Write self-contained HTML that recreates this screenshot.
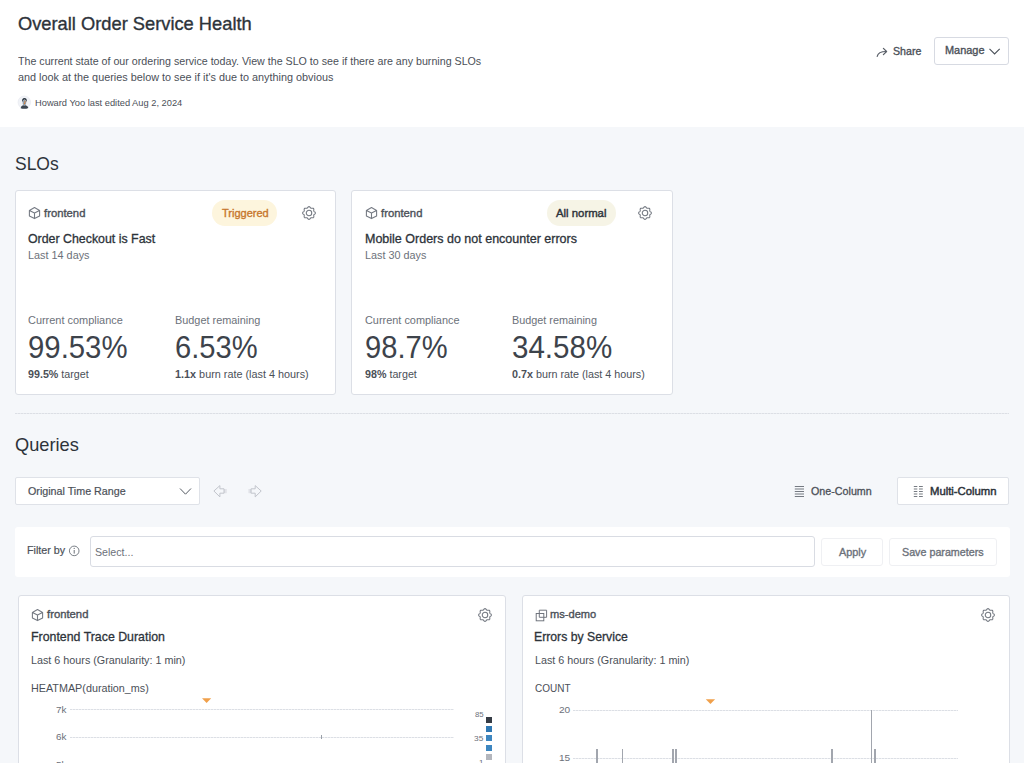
<!DOCTYPE html>
<html><head><meta charset="utf-8">
<style>
*{box-sizing:border-box;margin:0;padding:0}
html,body{width:1024px;height:763px;overflow:hidden}
body{font-family:"Liberation Sans",sans-serif;background:#f5f7fa;color:#2d333a;position:relative}
.tx{position:absolute;white-space:nowrap;line-height:1;transform-origin:0 0}
.bx{position:absolute}
.card{position:absolute;background:#fff;border:1px solid #dcdfe6;border-radius:3px}
svg{position:absolute;overflow:visible}
</style></head><body>
<div class="bx" style="left:0;top:0;width:1024px;height:127px;background:#fff"></div>

<!-- avatar -->
<svg style="left:17px;top:95px" width="15" height="15" viewBox="0 0 15 15">
<circle cx="7.3" cy="7.3" r="6.3" fill="#f1f3f7" stroke="#e2e5ec" stroke-width="0.5"/>
<path d="M3.6 13.2 Q4 10.6 6 10.2 L8.8 10.2 Q10.8 10.6 11.4 13 Q7.5 14.6 3.6 13.2 Z" fill="#3b4550"/>
<path d="M5 6.5 Q4.8 3.2 7.4 3 Q10 3.1 9.8 6.2 L9.3 6.8 Q9.4 4.8 7.4 4.6 Q5.6 4.8 5.6 6.8 Z" fill="#2e3742"/>
<path d="M5.6 6.4 Q5.6 4.8 7.4 4.7 Q9.3 4.8 9.3 6.6 L9 9 Q8.4 10.6 7.4 10.7 Q6.2 10.6 5.8 9.2 Z" fill="#8fa0ae"/>
<path d="M7.6 5.6 L8.6 6 L8.2 8.2 L7.4 9.6 L6.6 8.6 L7.6 7.8 Z" fill="#e27b2c"/>
</svg>
<!-- share -->
<svg style="left:873px;top:44px" width="18" height="16" viewBox="0 0 18 16">
<path d="M4.2 12.4 Q5.2 7.5 13.3 7.5" fill="none" stroke="#585e67" stroke-width="1.2" stroke-linecap="round"/>
<path d="M10.4 4.3 L13.6 7.5 L10.4 10.7" fill="none" stroke="#585e67" stroke-width="1.2" stroke-linecap="round" stroke-linejoin="round"/>
</svg>
<!-- manage -->
<div class="bx" style="left:934px;top:37px;width:75px;height:28px;border:1px solid #d7dae2;border-radius:3px;background:#fff"></div>
<svg style="left:989px;top:48px" width="12" height="8" viewBox="0 0 12 8">
<path d="M0.5 0.8 L5.6 6 L10.7 0.8" fill="none" stroke="#4a5058" stroke-width="1.1"/>
</svg>

<!-- SLO cards -->
<div class="card" style="left:15px;top:190px;width:321px;height:205px"></div>
<div class="card" style="left:351px;top:190px;width:322px;height:205px"></div>
<div class="bx" style="left:212px;top:200px;width:65px;height:26px;border-radius:13px;background:#fdf5dd"></div>
<div class="bx" style="left:547px;top:200px;width:69px;height:26px;border-radius:13px;background:#f6f4e6;background-image:radial-gradient(#dedbc6 0.55px,transparent 0.7px);background-size:2px 2px"></div>



<!-- divider -->
<div class="bx" style="left:15px;top:413.3px;width:994px;height:1px;background:repeating-linear-gradient(90deg,#dcdfe5 0 2px,#e9ebef 2px 3px)"></div>

<!-- time range select -->
<div class="bx" style="left:15px;top:477px;width:185px;height:28px;border:1px solid #dfe2e8;border-radius:2px;background:#fff"></div>
<svg style="left:179px;top:487px" width="13" height="9" viewBox="0 0 13 9">
<path d="M1 1.5 L6.5 7.2 L12 1.5" fill="none" stroke="#555b63" stroke-width="1"/>
</svg>
<svg style="left:212px;top:484px" width="16" height="15" viewBox="0 0 16 15">
<path d="M1.9 7 L7.9 1.6 L7.9 4.8 L12 4.8 L12 9.2 L7.9 9.2 L7.9 12.9 Z" fill="none" stroke="#c2c5cc" stroke-width="1" stroke-linejoin="round"/>
<path d="M12.7 5 V9.2 M14 5 V9.2" stroke="#c2c5cc" stroke-width="0.6"/>
</svg>
<svg style="left:247px;top:484px" width="16" height="15" viewBox="0 0 16 15">
<path d="M14.2 7 L8.2 1.6 L8.2 4.8 L4.1 4.8 L4.1 9.2 L8.2 9.2 L8.2 12.9 Z" fill="none" stroke="#c2c5cc" stroke-width="1" stroke-linejoin="round"/>
<path d="M3.4 5 V9.2 M2.1 5 V9.2" stroke="#c2c5cc" stroke-width="0.6"/>
</svg>

<!-- one column icon -->
<svg style="left:794px;top:484px" width="11" height="14" viewBox="0 0 11 14"><path d="M0.8 2.5 H10 M0.8 5 H10 M0.8 7.5 H10 M0.8 10 H10 M0.8 12.5 H10" stroke="#5d636b" stroke-width="0.85"/></svg>
<div class="bx" style="left:897px;top:477px;width:112px;height:28px;border:1px solid #dfe2e8;border-radius:2px;background:#fff"></div>
<svg style="left:913px;top:484px" width="11" height="14" viewBox="0 0 11 14"><path d="M0.8 2.5 H4.3 M0.8 5 H4.3 M0.8 7.5 H4.3 M0.8 10 H4.3 M0.8 12.5 H4.3 M6 2.5 H9.8 M6 5 H9.8 M6 7.5 H9.8 M6 10 H9.8 M6 12.5 H9.8" stroke="#5d636b" stroke-width="0.85"/></svg>

<!-- filter panel -->
<div class="bx" style="left:14.5px;top:527px;width:995px;height:49.5px;background:#fff;border-radius:3px"></div>
<svg style="left:68px;top:544.5px" width="12" height="12" viewBox="0 0 12 12">
<circle cx="6.2" cy="5.9" r="4.8" fill="none" stroke="#6a7078" stroke-width="0.9"/>
<path d="M6.2 5 V8.6" stroke="#6a7078" stroke-width="1"/>
<circle cx="6.2" cy="3.4" r="0.6" fill="#6a7078"/>
</svg>
<div class="bx" style="left:89.5px;top:536px;width:725.5px;height:31px;border:1px solid #d9dce3;border-radius:3px;background:#fff"></div>
<div class="bx" style="left:821px;top:538px;width:62px;height:28px;border:1px solid #eff0f3;border-radius:3px;background:#fff"></div>
<div class="bx" style="left:889px;top:538px;width:108px;height:28px;border:1px solid #eff0f3;border-radius:3px;background:#fff"></div>

<!-- query cards -->
<div class="card" style="left:17.6px;top:595px;width:488px;height:200px"></div>
<div class="card" style="left:521.5px;top:595px;width:488px;height:200px"></div>

<!-- heatmap -->
<div class="bx" style="left:70px;top:709px;width:384px;height:1px;background:repeating-linear-gradient(90deg,#dcdfe5 0 2px,#eef0f3 2px 3px)"></div>
<div class="bx" style="left:70px;top:737px;width:384px;height:1px;background:repeating-linear-gradient(90deg,#dcdfe5 0 2px,#eef0f3 2px 3px)"></div>
<div class="bx" style="left:320.5px;top:735px;width:1px;height:4px;background:#9aa0a8"></div>
<svg style="left:201px;top:697px" width="12" height="7" viewBox="0 0 12 7">
<path d="M1 1.2 H10.2 L5.6 5.9 Z" fill="#f0a04b"/>
</svg>
<div class="bx" style="left:486px;top:717px;width:6px;height:6px;background:#353c45"></div>
<div class="bx" style="left:486px;top:726px;width:6px;height:6px;background:#2f78b3"></div>
<div class="bx" style="left:486px;top:735px;width:6px;height:6px;background:#3d86c0"></div>
<div class="bx" style="left:486px;top:744.5px;width:6px;height:6px;background:#3d86c0"></div>
<div class="bx" style="left:486px;top:754px;width:6px;height:6px;background:#b3b6bd"></div>

<!-- count chart -->
<div class="bx" style="left:573px;top:710px;width:385px;height:1px;background:repeating-linear-gradient(90deg,#dcdfe5 0 2px,#eef0f3 2px 3px)"></div>
<div class="bx" style="left:573px;top:758px;width:385px;height:1px;background:repeating-linear-gradient(90deg,#dcdfe5 0 2px,#eef0f3 2px 3px)"></div>
<svg style="left:705px;top:698px" width="12" height="7" viewBox="0 0 12 7">
<path d="M0.8 1.3 H10.1 L5.45 5.9 Z" fill="#f0a04b"/>
</svg>
<div class="bx" style="left:596.1px;top:749px;width:1.8px;height:20px;background:#a2a6ae"></div>
<div class="bx" style="left:621.5px;top:749px;width:1.8px;height:20px;background:#a2a6ae"></div>
<div class="bx" style="left:672.1px;top:749px;width:1.8px;height:20px;background:#a2a6ae"></div>
<div class="bx" style="left:675.1px;top:749px;width:1.8px;height:20px;background:#a2a6ae"></div>
<div class="bx" style="left:831.2px;top:749px;width:1.8px;height:20px;background:#a2a6ae"></div>
<div class="bx" style="left:870.6px;top:710px;width:1.8px;height:60px;background:#a2a6ae"></div>
<div class="bx" style="left:873.9px;top:749px;width:1.8px;height:20px;background:#a2a6ae"></div>

<!--ICONS-->
<svg style="left:301.90px;top:206.00px" width="14" height="14" viewBox="0 0 14 14"><path d="M7.00 0.60 L7.41 0.69 L7.80 0.95 L8.13 1.31 L8.42 1.69 L8.70 2.00 L8.99 2.20 L9.34 2.26 L9.75 2.24 L10.22 2.18 L10.71 2.16 L11.17 2.25 L11.53 2.47 L11.75 2.83 L11.84 3.29 L11.82 3.78 L11.76 4.25 L11.74 4.66 L11.80 5.01 L12.00 5.30 L12.31 5.58 L12.69 5.87 L13.05 6.20 L13.31 6.59 L13.40 7.00 L13.31 7.41 L13.05 7.80 L12.69 8.13 L12.31 8.42 L12.00 8.70 L11.80 8.99 L11.74 9.34 L11.76 9.75 L11.82 10.22 L11.84 10.71 L11.75 11.17 L11.53 11.53 L11.17 11.75 L10.71 11.84 L10.22 11.82 L9.75 11.76 L9.34 11.74 L8.99 11.80 L8.70 12.00 L8.42 12.31 L8.13 12.69 L7.80 13.05 L7.41 13.31 L7.00 13.40 L6.59 13.31 L6.20 13.05 L5.87 12.69 L5.58 12.31 L5.30 12.00 L5.01 11.80 L4.66 11.74 L4.25 11.76 L3.78 11.82 L3.29 11.84 L2.83 11.75 L2.47 11.53 L2.25 11.17 L2.16 10.71 L2.18 10.22 L2.24 9.75 L2.26 9.34 L2.20 8.99 L2.00 8.70 L1.69 8.42 L1.31 8.13 L0.95 7.80 L0.69 7.41 L0.60 7.00 L0.69 6.59 L0.95 6.20 L1.31 5.87 L1.69 5.58 L2.00 5.30 L2.20 5.01 L2.26 4.66 L2.24 4.25 L2.18 3.78 L2.16 3.29 L2.25 2.83 L2.47 2.47 L2.83 2.25 L3.29 2.16 L3.78 2.18 L4.25 2.24 L4.66 2.26 L5.01 2.20 L5.30 2.00 L5.58 1.69 L5.87 1.31 L6.20 0.95 L6.59 0.69 L7.00 0.60Z" fill="none" stroke="#737881" stroke-width="1.05"/><circle cx="7" cy="7" r="2.75" fill="none" stroke="#737881" stroke-width="1.05"/></svg>
<svg style="left:638.40px;top:206.00px" width="14" height="14" viewBox="0 0 14 14"><path d="M7.00 0.60 L7.41 0.69 L7.80 0.95 L8.13 1.31 L8.42 1.69 L8.70 2.00 L8.99 2.20 L9.34 2.26 L9.75 2.24 L10.22 2.18 L10.71 2.16 L11.17 2.25 L11.53 2.47 L11.75 2.83 L11.84 3.29 L11.82 3.78 L11.76 4.25 L11.74 4.66 L11.80 5.01 L12.00 5.30 L12.31 5.58 L12.69 5.87 L13.05 6.20 L13.31 6.59 L13.40 7.00 L13.31 7.41 L13.05 7.80 L12.69 8.13 L12.31 8.42 L12.00 8.70 L11.80 8.99 L11.74 9.34 L11.76 9.75 L11.82 10.22 L11.84 10.71 L11.75 11.17 L11.53 11.53 L11.17 11.75 L10.71 11.84 L10.22 11.82 L9.75 11.76 L9.34 11.74 L8.99 11.80 L8.70 12.00 L8.42 12.31 L8.13 12.69 L7.80 13.05 L7.41 13.31 L7.00 13.40 L6.59 13.31 L6.20 13.05 L5.87 12.69 L5.58 12.31 L5.30 12.00 L5.01 11.80 L4.66 11.74 L4.25 11.76 L3.78 11.82 L3.29 11.84 L2.83 11.75 L2.47 11.53 L2.25 11.17 L2.16 10.71 L2.18 10.22 L2.24 9.75 L2.26 9.34 L2.20 8.99 L2.00 8.70 L1.69 8.42 L1.31 8.13 L0.95 7.80 L0.69 7.41 L0.60 7.00 L0.69 6.59 L0.95 6.20 L1.31 5.87 L1.69 5.58 L2.00 5.30 L2.20 5.01 L2.26 4.66 L2.24 4.25 L2.18 3.78 L2.16 3.29 L2.25 2.83 L2.47 2.47 L2.83 2.25 L3.29 2.16 L3.78 2.18 L4.25 2.24 L4.66 2.26 L5.01 2.20 L5.30 2.00 L5.58 1.69 L5.87 1.31 L6.20 0.95 L6.59 0.69 L7.00 0.60Z" fill="none" stroke="#737881" stroke-width="1.05"/><circle cx="7" cy="7" r="2.75" fill="none" stroke="#737881" stroke-width="1.05"/></svg>
<svg style="left:477.90px;top:608.00px" width="14" height="14" viewBox="0 0 14 14"><path d="M7.00 0.60 L7.41 0.69 L7.80 0.95 L8.13 1.31 L8.42 1.69 L8.70 2.00 L8.99 2.20 L9.34 2.26 L9.75 2.24 L10.22 2.18 L10.71 2.16 L11.17 2.25 L11.53 2.47 L11.75 2.83 L11.84 3.29 L11.82 3.78 L11.76 4.25 L11.74 4.66 L11.80 5.01 L12.00 5.30 L12.31 5.58 L12.69 5.87 L13.05 6.20 L13.31 6.59 L13.40 7.00 L13.31 7.41 L13.05 7.80 L12.69 8.13 L12.31 8.42 L12.00 8.70 L11.80 8.99 L11.74 9.34 L11.76 9.75 L11.82 10.22 L11.84 10.71 L11.75 11.17 L11.53 11.53 L11.17 11.75 L10.71 11.84 L10.22 11.82 L9.75 11.76 L9.34 11.74 L8.99 11.80 L8.70 12.00 L8.42 12.31 L8.13 12.69 L7.80 13.05 L7.41 13.31 L7.00 13.40 L6.59 13.31 L6.20 13.05 L5.87 12.69 L5.58 12.31 L5.30 12.00 L5.01 11.80 L4.66 11.74 L4.25 11.76 L3.78 11.82 L3.29 11.84 L2.83 11.75 L2.47 11.53 L2.25 11.17 L2.16 10.71 L2.18 10.22 L2.24 9.75 L2.26 9.34 L2.20 8.99 L2.00 8.70 L1.69 8.42 L1.31 8.13 L0.95 7.80 L0.69 7.41 L0.60 7.00 L0.69 6.59 L0.95 6.20 L1.31 5.87 L1.69 5.58 L2.00 5.30 L2.20 5.01 L2.26 4.66 L2.24 4.25 L2.18 3.78 L2.16 3.29 L2.25 2.83 L2.47 2.47 L2.83 2.25 L3.29 2.16 L3.78 2.18 L4.25 2.24 L4.66 2.26 L5.01 2.20 L5.30 2.00 L5.58 1.69 L5.87 1.31 L6.20 0.95 L6.59 0.69 L7.00 0.60Z" fill="none" stroke="#737881" stroke-width="1.05"/><circle cx="7" cy="7" r="2.75" fill="none" stroke="#737881" stroke-width="1.05"/></svg>
<svg style="left:981.00px;top:608.00px" width="14" height="14" viewBox="0 0 14 14"><path d="M7.00 0.60 L7.41 0.69 L7.80 0.95 L8.13 1.31 L8.42 1.69 L8.70 2.00 L8.99 2.20 L9.34 2.26 L9.75 2.24 L10.22 2.18 L10.71 2.16 L11.17 2.25 L11.53 2.47 L11.75 2.83 L11.84 3.29 L11.82 3.78 L11.76 4.25 L11.74 4.66 L11.80 5.01 L12.00 5.30 L12.31 5.58 L12.69 5.87 L13.05 6.20 L13.31 6.59 L13.40 7.00 L13.31 7.41 L13.05 7.80 L12.69 8.13 L12.31 8.42 L12.00 8.70 L11.80 8.99 L11.74 9.34 L11.76 9.75 L11.82 10.22 L11.84 10.71 L11.75 11.17 L11.53 11.53 L11.17 11.75 L10.71 11.84 L10.22 11.82 L9.75 11.76 L9.34 11.74 L8.99 11.80 L8.70 12.00 L8.42 12.31 L8.13 12.69 L7.80 13.05 L7.41 13.31 L7.00 13.40 L6.59 13.31 L6.20 13.05 L5.87 12.69 L5.58 12.31 L5.30 12.00 L5.01 11.80 L4.66 11.74 L4.25 11.76 L3.78 11.82 L3.29 11.84 L2.83 11.75 L2.47 11.53 L2.25 11.17 L2.16 10.71 L2.18 10.22 L2.24 9.75 L2.26 9.34 L2.20 8.99 L2.00 8.70 L1.69 8.42 L1.31 8.13 L0.95 7.80 L0.69 7.41 L0.60 7.00 L0.69 6.59 L0.95 6.20 L1.31 5.87 L1.69 5.58 L2.00 5.30 L2.20 5.01 L2.26 4.66 L2.24 4.25 L2.18 3.78 L2.16 3.29 L2.25 2.83 L2.47 2.47 L2.83 2.25 L3.29 2.16 L3.78 2.18 L4.25 2.24 L4.66 2.26 L5.01 2.20 L5.30 2.00 L5.58 1.69 L5.87 1.31 L6.20 0.95 L6.59 0.69 L7.00 0.60Z" fill="none" stroke="#737881" stroke-width="1.05"/><circle cx="7" cy="7" r="2.75" fill="none" stroke="#737881" stroke-width="1.05"/></svg>
<svg style="left:28.80px;top:207.00px" width="12" height="12" viewBox="0 0 12 12"><path d="M5.5 0.6 L10.6 3.4 L10.6 8.9 L5.5 11.6 L0.4 8.9 L0.4 3.4 Z M0.4 3.4 L5.5 6.1 L10.6 3.4 M5.5 6.1 V11.6" fill="none" stroke="#767b84" stroke-width="1.1" stroke-linejoin="round"/></svg>
<svg style="left:365.80px;top:207.00px" width="12" height="12" viewBox="0 0 12 12"><path d="M5.5 0.6 L10.6 3.4 L10.6 8.9 L5.5 11.6 L0.4 8.9 L0.4 3.4 Z M0.4 3.4 L5.5 6.1 L10.6 3.4 M5.5 6.1 V11.6" fill="none" stroke="#767b84" stroke-width="1.1" stroke-linejoin="round"/></svg>
<svg style="left:31.90px;top:609.00px" width="12" height="12" viewBox="0 0 12 12"><path d="M5.5 0.6 L10.6 3.4 L10.6 8.9 L5.5 11.6 L0.4 8.9 L0.4 3.4 Z M0.4 3.4 L5.5 6.1 L10.6 3.4 M5.5 6.1 V11.6" fill="none" stroke="#767b84" stroke-width="1.1" stroke-linejoin="round"/></svg>
<svg style="left:535px;top:609px" width="13" height="13" viewBox="0 0 13 13"><path d="M4.3 1.2 H11.6 V8.3 H8.8 M4.3 1.2 V4.4" fill="none" stroke="#6b7079" stroke-width="0.95"/><rect x="1.2" y="4.5" width="7.6" height="7.3" fill="none" stroke="#6b7079" stroke-width="0.95"/><path d="M4.3 4.5 V8.3 H8.8" fill="none" stroke="#6b7079" stroke-width="0.95"/></svg>
<!--/ICONS-->
<span id="t0" class="tx" style="left:18.00px;top:15.06px;font-size:18.6px;transform:scaleX(0.9833);color:#2d333a;-webkit-text-stroke:0.35px currentColor;">Overall Order Service Health</span>
<span id="t1" class="tx" style="left:17.84px;top:55.57px;font-size:10.9px;transform:scaleX(0.9793);color:#4b5058;">The current state of our ordering service today. View the SLO to see if there are any burning SLOs</span>
<span id="t2" class="tx" style="left:17.84px;top:71.77px;font-size:10.9px;transform:scaleX(0.9953);color:#4b5058;">and look at the queries below to see if it's due to anything obvious</span>
<span id="t3" class="tx" style="left:34.93px;top:97.87px;font-size:9.6px;transform:scaleX(0.9685);color:#4b5058;">Howard Yoo last edited Aug 2, 2024</span>
<span id="t4" class="tx" style="left:893.43px;top:46.49px;font-size:11px;transform:scaleX(0.9653);color:#4b5058;-webkit-text-stroke:0.35px currentColor;">Share</span>
<span id="t5" class="tx" style="left:944.63px;top:45.19px;font-size:11px;transform:scaleX(0.9943);color:#4b5058;-webkit-text-stroke:0.35px currentColor;">Manage</span>
<span id="t6" class="tx" style="left:14.60px;top:154.56px;font-size:18.6px;transform:scaleX(0.9396);color:#2d333a;">SLOs</span>
<span id="t7" class="tx" style="left:43.83px;top:207.69px;font-size:11px;transform:scaleX(1.0264);color:#4b5058;-webkit-text-stroke:0.35px currentColor;">frontend</span>
<span id="t8" class="tx" style="left:27.73px;top:232.80px;font-size:12.4px;transform:scaleX(0.9979);color:#2d333a;-webkit-text-stroke:0.3px currentColor;">Order Checkout is Fast</span>
<span id="t9" class="tx" style="left:27.84px;top:250.07px;font-size:10.9px;transform:scaleX(0.9961);color:#6c717a;">Last 14 days</span>
<span id="t10" class="tx" style="left:27.84px;top:315.07px;font-size:10.9px;transform:scaleX(1.0041);color:#6c717a;">Current compliance</span>
<span id="t11" class="tx" style="left:175.14px;top:315.07px;font-size:10.9px;transform:scaleX(0.9994);color:#6c717a;">Budget remaining</span>
<span id="t12" class="tx" style="left:27.59px;top:332.45px;font-size:31.6px;transform:scaleX(0.9288);color:#3d434b;">99.53%</span>
<span id="t13" class="tx" style="left:174.89px;top:332.45px;font-size:31.6px;transform:scaleX(0.9233);color:#3d434b;">6.53%</span>
<span id="t14" class="tx" style="left:27.84px;top:368.87px;font-size:10.9px;transform:scaleX(0.9832);color:#4b5058;"><b>99.5%</b> target</span>
<span id="t15" class="tx" style="left:175.14px;top:368.87px;font-size:10.9px;transform:scaleX(0.9949);color:#4b5058;"><b>1.1x</b> burn rate (last 4 hours)</span>
<span id="t16" class="tx" style="left:380.83px;top:207.69px;font-size:11px;transform:scaleX(1.0264);color:#4b5058;-webkit-text-stroke:0.35px currentColor;">frontend</span>
<span id="t17" class="tx" style="left:364.73px;top:232.80px;font-size:12.4px;transform:scaleX(1.0089);color:#2d333a;-webkit-text-stroke:0.3px currentColor;">Mobile Orders do not encounter errors</span>
<span id="t18" class="tx" style="left:364.84px;top:250.07px;font-size:10.9px;transform:scaleX(0.9929);color:#6c717a;">Last 30 days</span>
<span id="t19" class="tx" style="left:364.84px;top:315.07px;font-size:10.9px;transform:scaleX(1.0009);color:#6c717a;">Current compliance</span>
<span id="t20" class="tx" style="left:512.14px;top:315.07px;font-size:10.9px;transform:scaleX(0.9947);color:#6c717a;">Budget remaining</span>
<span id="t21" class="tx" style="left:364.59px;top:332.45px;font-size:31.6px;transform:scaleX(0.9222);color:#3d434b;">98.7%</span>
<span id="t22" class="tx" style="left:511.89px;top:332.45px;font-size:31.6px;transform:scaleX(0.9353);color:#3d434b;">34.58%</span>
<span id="t23" class="tx" style="left:364.84px;top:368.87px;font-size:10.9px;transform:scaleX(0.9836);color:#4b5058;"><b>98%</b> target</span>
<span id="t24" class="tx" style="left:512.14px;top:368.87px;font-size:10.9px;transform:scaleX(0.9882);color:#4b5058;"><b>0.7x</b> burn rate (last 4 hours)</span>
<span id="t25" class="tx" style="left:221.73px;top:208.09px;font-size:11px;transform:scaleX(1.0015);color:#c7772d;-webkit-text-stroke:0.35px currentColor;">Triggered</span>
<span id="t26" class="tx" style="left:556.33px;top:207.99px;font-size:11px;transform:scaleX(1.0314);color:#2d333a;-webkit-text-stroke:0.4px currentColor;">All normal</span>
<span id="t27" class="tx" style="left:14.60px;top:435.96px;font-size:18.6px;transform:scaleX(0.9800);color:#2d333a;">Queries</span>
<span id="t28" class="tx" style="left:27.83px;top:485.89px;font-size:11px;transform:scaleX(0.9737);color:#4b5058;-webkit-text-stroke:0.2px currentColor;">Original Time Range</span>
<span id="t29" class="tx" style="left:811.03px;top:485.99px;font-size:11px;transform:scaleX(0.9740);color:#4b5058;-webkit-text-stroke:0.3px currentColor;">One-Column</span>
<span id="t30" class="tx" style="left:929.83px;top:485.99px;font-size:11px;transform:scaleX(1.0269);color:#2d333a;-webkit-text-stroke:0.45px currentColor;">Multi-Column</span>
<span id="t31" class="tx" style="left:27.33px;top:544.59px;font-size:11px;transform:scaleX(0.9748);color:#4b5058;-webkit-text-stroke:0.2px currentColor;">Filter by</span>
<span id="t32" class="tx" style="left:95.34px;top:546.57px;font-size:10.9px;transform:scaleX(0.9763);color:#6c717a;">Select...</span>
<span id="t33" class="tx" style="left:838.53px;top:546.69px;font-size:11px;transform:scaleX(0.9894);color:#6c717a;-webkit-text-stroke:0.35px currentColor;">Apply</span>
<span id="t34" class="tx" style="left:902.33px;top:546.69px;font-size:11px;transform:scaleX(0.9746);color:#6c717a;-webkit-text-stroke:0.35px currentColor;">Save parameters</span>
<span id="t35" class="tx" style="left:46.93px;top:609.29px;font-size:11px;transform:scaleX(1.0264);color:#4b5058;-webkit-text-stroke:0.35px currentColor;">frontend</span>
<span id="t36" class="tx" style="left:31.00px;top:630.88px;font-size:12.9px;transform:scaleX(0.9583);color:#2d333a;-webkit-text-stroke:0.3px currentColor;">Frontend Trace Duration</span>
<span id="t37" class="tx" style="left:31.14px;top:654.77px;font-size:10.9px;transform:scaleX(0.9888);color:#4b5058;">Last 6 hours (Granularity: 1 min)</span>
<span id="t38" class="tx" style="left:31.14px;top:682.77px;font-size:10.9px;transform:scaleX(0.9899);color:#4b5058;">HEATMAP(duration_ms)</span>
<span id="t39" class="tx" style="left:550.33px;top:608.99px;font-size:11px;transform:scaleX(1.0086);color:#4b5058;-webkit-text-stroke:0.35px currentColor;">ms-demo</span>
<span id="t40" class="tx" style="left:534.40px;top:630.68px;font-size:12.9px;transform:scaleX(0.9489);color:#2d333a;-webkit-text-stroke:0.3px currentColor;">Errors by Service</span>
<span id="t41" class="tx" style="left:534.54px;top:654.57px;font-size:10.9px;transform:scaleX(0.9882);color:#4b5058;">Last 6 hours (Granularity: 1 min)</span>
<span id="t42" class="tx" style="left:534.54px;top:682.57px;font-size:10.9px;transform:scaleX(0.9175);color:#4b5058;">COUNT</span>
<span id="t43" class="tx" style="left:55.93px;top:704.77px;font-size:9.6px;transform:scaleX(1.0299);color:#6c717a;">7k</span>
<span id="t44" class="tx" style="left:55.93px;top:732.37px;font-size:9.6px;transform:scaleX(1.0299);color:#6c717a;">6k</span>
<span id="t45" class="tx" style="left:55.93px;top:759.97px;font-size:9.6px;transform:scaleX(1.0299);color:#6c717a;">5k</span>
<span id="t46" class="tx" style="left:475.07px;top:710.97px;font-size:7.6px;transform:scaleX(1.0249);color:#6c717a;">85</span>
<span id="t47" class="tx" style="left:474.27px;top:734.97px;font-size:7.6px;transform:scaleX(1.0959);color:#6c717a;">35</span>
<span id="t48" class="tx" style="left:479.07px;top:758.97px;font-size:7.6px;transform:scaleX(1.0542);color:#6c717a;">1</span>
<span id="t49" class="tx" style="left:558.73px;top:704.87px;font-size:9.6px;transform:scaleX(1.0536);color:#6c717a;">20</span>
<span id="t50" class="tx" style="left:558.73px;top:753.27px;font-size:9.6px;transform:scaleX(1.0536);color:#6c717a;">15</span>
</body></html>
